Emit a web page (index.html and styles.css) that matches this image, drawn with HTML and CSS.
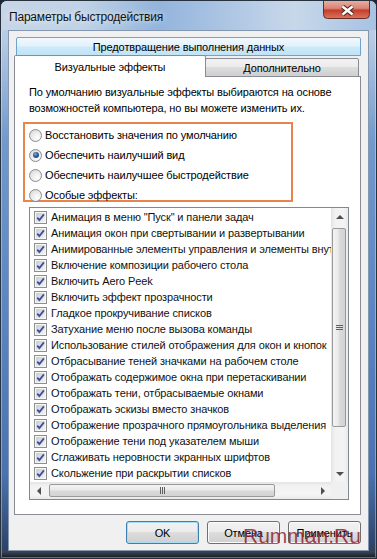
FILE: index.html
```html
<!DOCTYPE html>
<html lang="ru">
<head>
  <meta charset="UTF-8" />
  <title>Параметры быстродействия</title>
  <link rel="stylesheet" href="styles.css">
</head>
<body>
  <svg class="defs" width="0" height="0">
    <defs>
      <linearGradient id="cbFill" x1="0" y1="0" x2="1" y2="1">
        <stop offset="0" stop-color="#c9ced6"/>
        <stop offset="1" stop-color="#f3f4f6"/>
      </linearGradient>
      <symbol id="chk" viewBox="0 0 13 13">
        <rect x="0.5" y="0.5" width="12" height="12" fill="#f6f6f6" stroke="#8e8f8f"/>
        <rect x="2" y="2" width="9" height="9" fill="url(#cbFill)"/>
        <path d="M3.2 6.6 L5.4 9 L9.9 3.4" fill="none" stroke="#3e5592" stroke-width="1.9"/>
      </symbol>
    </defs>
  </svg>

  <div class="window">
    <div class="titlebar">
      <span class="title">Параметры быстродействия</span>
      <div class="close">
        <svg width="47" height="19" viewBox="0 0 47 19">
          <defs>
            <linearGradient id="closeBg" x1="0" y1="0" x2="0" y2="1">
              <stop offset="0" stop-color="#e9b3a6"/>
              <stop offset="0.45" stop-color="#d98474"/>
              <stop offset="0.55" stop-color="#c23f2c"/>
              <stop offset="1" stop-color="#d9765e"/>
            </linearGradient>
          </defs>
          <path d="M0.5 0 V14.5 Q0.5 18.5 4.5 18.5 H42.5 Q46.5 18.5 46.5 14.5 V0" fill="url(#closeBg)" stroke="#6a2c25"/>
          <path d="M19.5 6.5 L29.5 14.5 M29.5 6.5 L19.5 14.5" stroke="#4b2420" stroke-width="4.6"/>
          <path d="M19.5 6.5 L29.5 14.5 M29.5 6.5 L19.5 14.5" stroke="#ffffff" stroke-width="2.6"/>
        </svg>
      </div>
    </div>

    <div class="client">
      <div class="tabs">
        <div class="tab-row back">
          <div class="tab hot">Предотвращение выполнения данных</div>
        </div>
        <div class="tab-row front">
          <div class="tab active">Визуальные эффекты</div>
          <div class="tab">Дополнительно</div>
        </div>
      </div>

      <div class="panel">
        <p class="desc">По умолчанию визуальные эффекты выбираются на основе<br>возможностей компьютера, но вы можете изменить их.</p>

        <div class="options">
          <div class="option"><span class="radio"></span>Восстановить значения по умолчанию</div>
          <div class="option"><span class="radio on"></span>Обеспечить наилучший вид</div>
          <div class="option"><span class="radio"></span>Обеспечить наилучшее быстродействие</div>
          <div class="option"><span class="radio"></span>Особые эффекты:</div>
        </div>

        <div class="listbox">
          <div class="items">
            <div class="item"><svg class="cb"><use href="#chk"/></svg>Анимация в меню "Пуск" и панели задач</div>
            <div class="item"><svg class="cb"><use href="#chk"/></svg>Анимация окон при свертывании и развертывании</div>
            <div class="item"><svg class="cb"><use href="#chk"/></svg>Анимированные элементы управления и элементы внутри окна</div>
            <div class="item"><svg class="cb"><use href="#chk"/></svg>Включение композиции рабочего стола</div>
            <div class="item"><svg class="cb"><use href="#chk"/></svg>Включить Aero Peek</div>
            <div class="item"><svg class="cb"><use href="#chk"/></svg>Включить эффект прозрачности</div>
            <div class="item"><svg class="cb"><use href="#chk"/></svg>Гладкое прокручивание списков</div>
            <div class="item"><svg class="cb"><use href="#chk"/></svg>Затухание меню после вызова команды</div>
            <div class="item"><svg class="cb"><use href="#chk"/></svg>Использование стилей отображения для окон и кнопок</div>
            <div class="item"><svg class="cb"><use href="#chk"/></svg>Отбрасывание теней значками на рабочем столе</div>
            <div class="item"><svg class="cb"><use href="#chk"/></svg>Отображать содержимое окна при перетаскивании</div>
            <div class="item"><svg class="cb"><use href="#chk"/></svg>Отображать тени, отбрасываемые окнами</div>
            <div class="item"><svg class="cb"><use href="#chk"/></svg>Отображать эскизы вместо значков</div>
            <div class="item"><svg class="cb"><use href="#chk"/></svg>Отображение прозрачного прямоугольника выделения</div>
            <div class="item"><svg class="cb"><use href="#chk"/></svg>Отображение тени под указателем мыши</div>
            <div class="item"><svg class="cb"><use href="#chk"/></svg>Сглаживать неровности экранных шрифтов</div>
            <div class="item"><svg class="cb"><use href="#chk"/></svg>Скольжение при раскрытии списков</div>
          </div>
          <div class="vscroll">
            <div class="sb-btn"><span class="arrow up"></span></div>
            <div class="sb-track">
              <div class="thumb-v"><span class="grip-v"></span></div>
            </div>
            <div class="sb-btn"><span class="arrow down"></span></div>
          </div>
          <div class="hscroll">
            <div class="sb-btn"><span class="arrow left"></span></div>
            <div class="sb-track">
              <div class="thumb-h"><span class="grip-h"></span></div>
            </div>
            <div class="sb-btn"><span class="arrow right"></span></div>
          </div>
          <div class="corner"></div>
        </div>
      </div>

      <div class="buttons">
        <button class="btn default">OK</button>
        <button class="btn">Отмена</button>
        <button class="btn">Применить</button>
      </div>
    </div>

    <div class="watermark">Rumman.Ru</div>
  </div>
</body>
</html>
```

FILE: styles.css
```css
body {
  margin: 0;
  background: #1d2633;
  font-family: "Liberation Sans", Arial, sans-serif;
  font-size: 11px;
  letter-spacing: -0.12px;
  color: #000;
}
.defs {
  position: absolute;
}
.window {
  position: relative;
  width: 377px;
  height: 559px;
  box-sizing: border-box;
  border: 1px solid #28323f;
  border-radius: 7px 7px 0 0;
  padding: 0 7px 7px;
  display: flex;
  flex-direction: column;
  overflow: hidden;
  background:
    linear-gradient(to bottom, rgba(0,0,0,0) 548px, #3a4250 551px, #161a20 100%),
    linear-gradient(to bottom, #c4d4e6 0, #b5cae3 40px, #7199cc 140px, #5b86c3 55%, #4a72b0 85%, #2a3d5c 100%);
  box-shadow: inset 0 0 0 1px rgba(255,255,255,0.35);
}
.titlebar {
  height: 29px;
  margin: 0 -7px;
  padding: 0 6px 0 8px;
  display: flex;
  align-items: flex-start;
  background: linear-gradient(to right, #c7d6e7 0, #c0d2e6 22%, #93b4dc 42%, #a9c3e2 58%, #c8d8ea 78%, #a7c2e3 100%);
}
.title {
  margin-top: 8px;
  line-height: 16px;
  font-size: 12px;
  letter-spacing: -0.2px;
  color: #111;
  text-shadow: 0 0 6px rgba(255,255,255,0.9);
}
.close {
  margin-left: auto;
  margin-top: -1px;
  height: 19px;
}
.close svg {
  display: block;
}

.client {
  height: 521px;
  box-sizing: border-box;
  border: 1px solid #8397b1;
  background: #f0f0f0;
  padding: 6px 7px 0 5px;
  display: flex;
  flex-direction: column;
}

/* tabs */
.tabs {
  height: 40px;
}
.tab-row {
  display: flex;
}
.tab-row.back {
  padding-left: 2px;
  height: 19px;
}
.tab-row.front {
  height: 21px;
  align-items: flex-end;
}
.tab {
  box-sizing: border-box;
  display: flex;
  align-items: center;
  justify-content: center;
  border: 1px solid #898c95;
  border-radius: 2px 2px 0 0;
  background: linear-gradient(to bottom, #f2f2f2 0, #ebebeb 50%, #dddddd 50%, #cfcfcf 100%);
  height: 19px;
  width: 154px;
  margin-left: -1px;
}
.tab.hot {
  flex: 1;
  margin-left: 0;
  border-color: #6ea3cd;
  background: linear-gradient(to bottom, #f2f9fd 0, #e2f2fb 45%, #cde9f8 55%, #bfe3f6 100%);
}
.tab.active {
  position: relative;
  z-index: 1;
  width: 192px;
  height: 22px;
  margin-left: 0;
  border-bottom: none;
  background: #fff;
}

.panel {
  margin-top: -1px;
  width: 347px;
  height: 439px;
  box-sizing: border-box;
  border: 1px solid #898c95;
  background: #fff;
  padding: 7px 12px 0 14px;
}
.desc {
  margin: 0;
  line-height: 16px;
  white-space: nowrap;
}
.options {
  margin: 6px 0 0 -6px;
  width: 270px;
  height: 80px;
  box-sizing: border-box;
  border: 2px solid #e8844c;
  padding: 1px 0 0 4px;
}
.option {
  display: flex;
  align-items: center;
  height: 20px;
  gap: 3px;
  white-space: nowrap;
}
.radio {
  width: 13px;
  height: 13px;
  box-sizing: border-box;
  border-radius: 50%;
  border: 1px solid #8b8b8b;
  background: radial-gradient(circle at 65% 70%, #ffffff 0, #ececec 45%, #d2d2d2 100%);
  display: flex;
  align-items: center;
  justify-content: center;
  flex-shrink: 0;
}
.radio.on::after {
  content: "";
  width: 6px;
  height: 6px;
  border-radius: 50%;
  background: radial-gradient(circle at 40% 35%, #7aa6dc 0, #2a5596 50%, #163a72 100%);
}

/* list */
.listbox {
  margin-top: 5px;
  width: 320px;
  height: 293px;
  box-sizing: border-box;
  border: 1px solid #828790;
  display: grid;
  grid-template-columns: 1fr 17px;
  grid-template-rows: 1fr 17px;
}
.items {
  overflow: hidden;
  padding: 1px 0 0 4px;
}
.item {
  display: flex;
  align-items: center;
  gap: 4px;
  height: 16px;
  white-space: nowrap;
  color: #111;
}
.cb {
  width: 13px;
  height: 13px;
  flex-shrink: 0;
}
.vscroll {
  display: flex;
  flex-direction: column;
  background: linear-gradient(to right, #e4e4e4 0, #f2f2f2 25%, #f4f4f4 75%, #e9e9e9 100%);
}
.hscroll {
  display: flex;
  background: linear-gradient(to bottom, #e4e4e4 0, #f2f2f2 25%, #f4f4f4 75%, #e9e9e9 100%);
}
.sb-btn {
  width: 17px;
  height: 17px;
  display: flex;
  align-items: center;
  justify-content: center;
  flex-shrink: 0;
}
.sb-track {
  flex: 1;
  display: flex;
}
.vscroll .sb-track {
  flex-direction: column;
}
.arrow {
  width: 0;
  height: 0;
}
.arrow.up {
  border-left: 4px solid transparent;
  border-right: 4px solid transparent;
  border-bottom: 4px solid #4f4f4f;
}
.arrow.down {
  border-left: 4px solid transparent;
  border-right: 4px solid transparent;
  border-top: 4px solid #4f4f4f;
}
.arrow.left {
  border-top: 4px solid transparent;
  border-bottom: 4px solid transparent;
  border-right: 4px solid #4f4f4f;
}
.arrow.right {
  border-top: 4px solid transparent;
  border-bottom: 4px solid transparent;
  border-left: 4px solid #4f4f4f;
}
.thumb-v {
  margin: 3px 2px 0 1px;
  height: 199px;
  box-sizing: border-box;
  border: 1px solid #999;
  border-radius: 2px;
  background: linear-gradient(to right, #f4f4f4 0, #e9e9e9 45%, #dadada 55%, #d3d3d3 100%);
  display: flex;
  align-items: center;
  justify-content: center;
}
.thumb-h {
  margin: 2px 0 2px 2px;
  width: 226px;
  box-sizing: border-box;
  border: 1px solid #999;
  border-radius: 2px;
  background: linear-gradient(to bottom, #f4f4f4 0, #e9e9e9 45%, #dadada 55%, #d3d3d3 100%);
  display: flex;
  align-items: center;
  justify-content: center;
}
.grip-v {
  width: 7px;
  height: 5px;
  background: repeating-linear-gradient(to bottom, #5f5f5f 0, #5f5f5f 1px, transparent 1px, transparent 2px);
}
.grip-h {
  width: 5px;
  height: 7px;
  background: repeating-linear-gradient(to right, #5f5f5f 0, #5f5f5f 1px, transparent 1px, transparent 2px);
}
.corner {
  background: #f0f0f0;
}

/* buttons */
.buttons {
  display: flex;
  justify-content: flex-end;
  gap: 8px;
  margin-top: 6px;
}
.btn {
  width: 73px;
  height: 23px;
  padding: 0;
  font: inherit;
  letter-spacing: inherit;
  color: #000;
  border: 1px solid #707070;
  border-radius: 3px;
  background: linear-gradient(to bottom, #f2f2f2 0, #ebebeb 50%, #dddddd 50%, #cfcfcf 100%);
  box-shadow: inset 0 0 0 1px #fbfbfb;
}
.btn.default {
  border-color: #3c7fb1;
  box-shadow: inset 0 0 0 1px #a6dcf4;
}

.watermark {
  position: absolute;
  left: 242px;
  top: 524px;
  font-size: 21px;
  line-height: 21px;
  letter-spacing: 0;
  color: rgba(140, 26, 40, 0.82);
}
```
